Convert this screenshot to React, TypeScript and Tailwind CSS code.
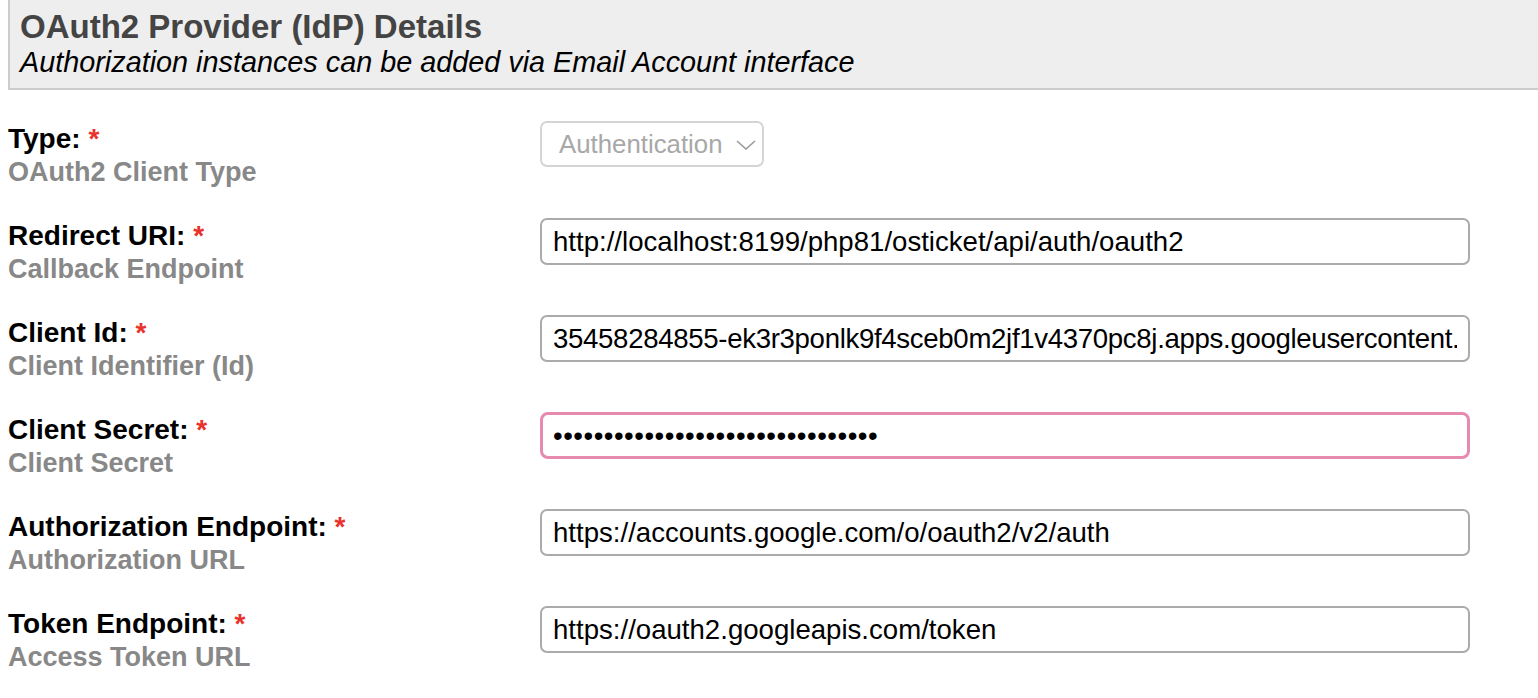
import React from 'react';

type Field = {
  label: string;
  hint: string;
  value?: string;
  kind: 'select' | 'text' | 'secret';
  tight?: boolean;
};

const fields: Field[] = [
  { label: 'Type:', hint: 'OAuth2 Client Type', kind: 'select', value: 'Authentication' },
  { label: 'Redirect URI:', hint: 'Callback Endpoint', kind: 'text', value: 'http://localhost:8199/php81/osticket/api/auth/oauth2' },
  {
    label: 'Client Id:',
    hint: 'Client Identifier (Id)',
    kind: 'text',
    value: '35458284855-ek3r3ponlk9f4sceb0m2jf1v4370pc8j.apps.googleusercontent.com',
    tight: true,
  },
  { label: 'Client Secret:', hint: 'Client Secret', kind: 'secret', value: 'GOCSPX-abcdefghijklmnopqrstuvwxy' },
  { label: 'Authorization Endpoint:', hint: 'Authorization URL', kind: 'text', value: 'https://accounts.google.com/o/oauth2/v2/auth' },
  { label: 'Token Endpoint:', hint: 'Access Token URL', kind: 'text', value: 'https://oauth2.googleapis.com/token' },
];

const FieldInput: React.FC<{ field: Field }> = ({ field }) => {
  if (field.kind === 'select') {
    return (
      <div className="flex h-[46px] w-[224px] items-center justify-between rounded-[7px] border-2 border-[#d4d4d4] pl-[17px] pr-[6px] text-[25.8px] text-[#a8a8a8]">
        <span>{field.value}</span>
        <svg width="20" height="10" viewBox="0 0 20 10" fill="none" className="mt-[2px]">
          <path d="M1 1l9 8 9-8" stroke="#9a9a9a" strokeWidth="1.6" />
        </svg>
      </div>
    );
  }

  const secret = field.kind === 'secret';
  return (
    <input
      readOnly
      type={secret ? 'password' : 'text'}
      value={field.value}
      className={
        secret
          ? 'h-[47px] w-[930px] rounded-[8px] border-[3px] border-[#e68ab0] bg-white pl-[10px] pr-[11px] text-[27.6px] tracking-[0.5px] text-black outline-none'
          : field.tight
            ? 'h-[47px] w-[930px] rounded-[7px] border-2 border-[#ababab] bg-white pl-[11px] pr-[11px] text-[27.6px] tracking-[-0.32px] text-black outline-none'
            : 'h-[47px] w-[930px] rounded-[7px] border-2 border-[#ababab] bg-white pl-[11px] pr-[11px] text-[27.6px] text-black outline-none'
      }
    />
  );
};

export default function App() {
  return (
    <div className="h-[698px] w-full overflow-hidden bg-white pl-2 font-['Liberation_Sans',Arial,sans-serif]">
      {/* Section header */}
      <div className="border-b-2 border-l-2 border-[#cccccc] bg-[#eeeeee] pb-[11px] pl-[10px] pt-[7px]">
        <h2 className="text-[33px] font-bold leading-[40px] text-[#444444]">OAuth2 Provider (IdP) Details</h2>
        <p className="text-[28.8px] italic leading-[30px] text-black">
          Authorization instances can be added via Email Account interface
        </p>
      </div>

      {/* Fields */}
      <div className="mt-[31px] flex flex-col">
        {fields.map((field) => (
          <div key={field.label} className="flex h-[97px] items-start">
            <div className="w-[532px] shrink-0 font-bold">
              <div className="mt-px text-[28px] leading-[33px] text-black">
                {field.label} <span className="text-[#e8322b]">*</span>
              </div>
              <div className="text-[27px] leading-[34px] text-[#888888]">{field.hint}</div>
            </div>
            <FieldInput field={field} />
          </div>
        ))}
      </div>
    </div>
  );
}
